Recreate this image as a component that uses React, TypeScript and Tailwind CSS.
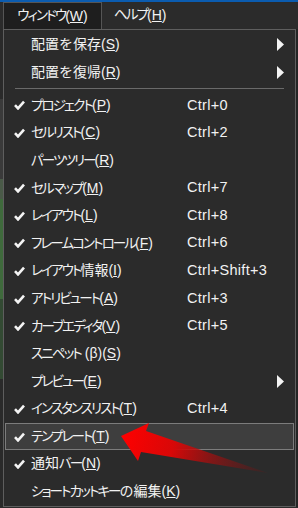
import React from 'react';

type Item = {
  label: string;
  key?: string;
  check?: boolean;
  shortcut?: string;
  sub?: boolean;
  active?: boolean;
};

const before: Item[] = [
  { label: '配置を保存', key: 'S', sub: true },
  { label: '配置を復帰', key: 'R', sub: true },
];

const items: Item[] = [
  { label: 'プロジェクト', key: 'P', check: true, shortcut: 'Ctrl+0' },
  { label: 'セルリスト', key: 'C', check: true, shortcut: 'Ctrl+2' },
  { label: 'パーツツリー', key: 'R' },
  { label: 'セルマップ', key: 'M', check: true, shortcut: 'Ctrl+7' },
  { label: 'レイアウト', key: 'L', check: true, shortcut: 'Ctrl+8' },
  { label: 'フレームコントロール', key: 'F', check: true, shortcut: 'Ctrl+6' },
  { label: 'レイアウト情報', key: 'I', check: true, shortcut: 'Ctrl+Shift+3' },
  { label: 'アトリビュート', key: 'A', check: true, shortcut: 'Ctrl+3' },
  { label: 'カーブエディタ', key: 'V', check: true, shortcut: 'Ctrl+5' },
  { label: 'スニペット (β)', key: 'S' },
  { label: 'プレビュー', key: 'E', sub: true },
  { label: 'インスタンスリスト', key: 'T', check: true, shortcut: 'Ctrl+4' },
  { label: 'テンプレート', key: 'T', check: true, active: true },
  { label: '通知バー', key: 'N', check: true },
  { label: 'ショートカットキーの編集', key: 'K' },
];

const Check = () => (
  <svg width="11" height="10" viewBox="0 0 11 10">
    <path d="M1 5.2 L4 8.4 L10 1.6" fill="none" stroke="#f4f4f4" strokeWidth="2.6" strokeLinejoin="miter" />
  </svg>
);

const Caret = () => (
  <svg width="7" height="13" viewBox="0 0 7 13">
    <path d="M0 0 L7 6.5 L0 13 Z" fill="#f4f4f4" />
  </svg>
);

// katakana runs are narrow in the original UI font, kanji stay full width
const Label = ({ text, k }: { text: string; k?: string }) => (
  <>
    {text.split(/([\u30A0-\u30FF]+)/).map((part, i) =>
      /[\u30A0-\u30FF]/.test(part) ? (
        <span key={i} className="text-[13.5px] tracking-[-1.9px] [font-feature-settings:'palt']">
          {part}
        </span>
      ) : (
        <span key={i}>{part}</span>
      )
    )}
    (<span className="underline underline-offset-[1px]">{k}</span>)
  </>
);

const Row = ({ it }: { it: Item }) => (
  <div
    className={
      'flex h-[27.6px] items-center border ' +
      (it.active ? 'border-[#7c7c7c] bg-[#3e3e3e]' : 'border-transparent')
    }
  >
    <div className="flex w-[25px] justify-center pl-[2px]">{it.check && <Check />}</div>
    <div className="w-[156px] whitespace-nowrap">
      <Label text={it.label} k={it.key} />
    </div>
    <div className="flex-1 whitespace-nowrap text-[14.5px] tracking-[0.3px]">{it.shortcut}</div>
    <div className="flex w-[16px] justify-start">{it.sub && <Caret />}</div>
  </div>
);

export default function App() {
  return (
    <div className="relative h-[508px] w-[298px] overflow-hidden bg-[#2b2b2b] text-[14px] text-[#f2f2f2] [font-family:'Liberation_Sans','Noto_Sans_CJK_JP',sans-serif]">
      <div className="h-[2px] bg-[#0b5cb0]" />
      <div className="flex h-[27px] items-stretch">
        <div className="ml-[3px] flex w-[99px] items-center justify-center border border-b-0 border-[#555] bg-[#1e1e1e]">
          <Label text="ウィンドウ" k="W" />
        </div>
        <div className="flex items-center pl-[12px]">
          <Label text="ヘルプ" k="H" />
        </div>
      </div>
      <div className="flex">
        <div className="flex w-[3px] flex-col">
          <div className="h-[70px] bg-[#2a2a2a]" />
          <div className="h-[80px] bg-[#3a3a3a]" />
          <div className="h-[20px] bg-[#4a5a48]" />
          <div className="h-[100px] bg-[#3f6a3c]" />
          <div className="h-[80px] bg-[#334a33]" />
          <div className="flex-1 bg-[#2a2a2a]" />
        </div>
        <div className="w-[293px] border border-[#5e5e5e] bg-[#2b2b2b] p-[1px]">
          {before.map((it, i) => (
            <Row key={'b' + i} it={it} />
          ))}
          <div className="flex h-[5.4px] items-center px-[10px]">
            <div className="h-[2px] w-full border-t border-[#6a6a6a] border-b-[#3a3a3a]" />
          </div>
          {items.map((it, i) => (
            <Row key={i} it={it} />
          ))}
        </div>
        <div className="flex-1 bg-[#242424]" />
      </div>
      <svg className="pointer-events-none absolute left-0 top-0" width="298" height="508" viewBox="0 0 298 508">
        <defs>
          <linearGradient id="arrowFill" x1="121" y1="436" x2="268" y2="473" gradientUnits="userSpaceOnUse">
            <stop offset="0" stopColor="#ff0000" />
            <stop offset="0.35" stopColor="#d80808" />
            <stop offset="1" stopColor="#6a1414" stopOpacity="0.2" />
          </linearGradient>
        </defs>
        <path d="M121 436 L149 423 L146 431 L268 473 L141 452 L138 461 Z" fill="url(#arrowFill)" />
      </svg>
    </div>
  );
}
